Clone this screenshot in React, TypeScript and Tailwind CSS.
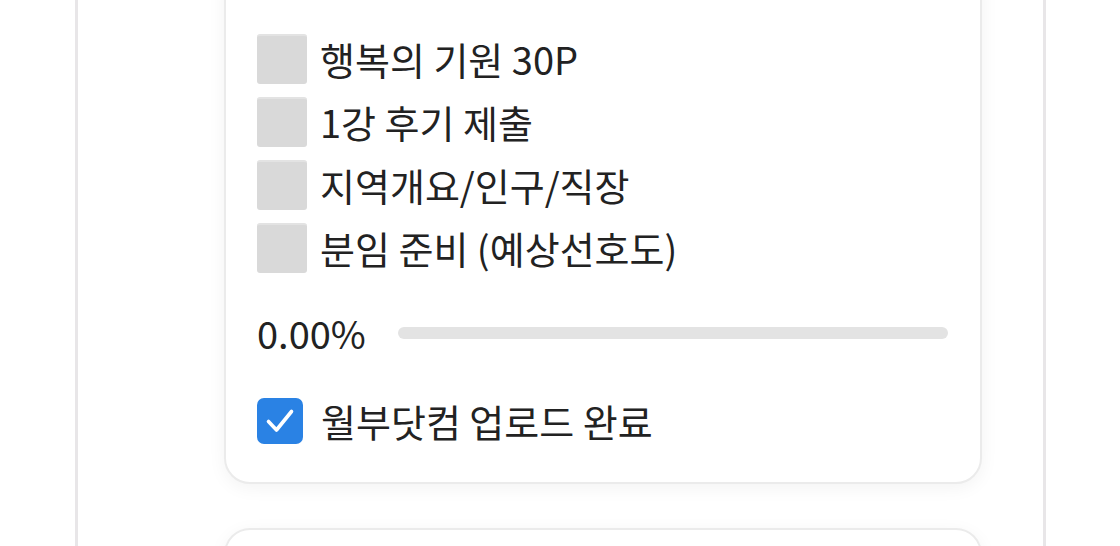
const tasks = ["행복의 기원 30P", "1강 후기 제출", "지역개요/인구/직장", "분임 준비 (예상선호도)"];

function TaskRow({ label }: { label: string }) {
  return (
    <div className="flex items-center gap-[13px] h-[50px]">
      <div className="w-[50px] h-[50px] rounded-[3px] bg-[#d9d9d9] border-t-2 border-[#e3e3e3] shrink-0" />
      <span className="text-[38px] leading-none text-[#222]">{label}</span>
    </div>
  );
}

export default function App() {
  return (
    <div
      className="w-[1120px] h-[546px] overflow-hidden bg-white"
      style={{ fontFamily: '"Noto Sans CJK KR", "Noto Sans", sans-serif' }}
    >
      <div className="ml-[75px] w-[971px] h-full flex flex-col border-x-[3px] border-[#e8e6e8] pl-[146px] pr-[61px]">
        {/* Study card */}
        <div className="-mt-[40px] pt-[72px] pb-[38px] pl-[31px] pr-[32px] rounded-[26px] border-2 border-[#ebebeb] bg-white shadow-[0_4px_18px_rgba(0,0,0,0.05)]">
          <div className="flex flex-col gap-[13px]">
            {tasks.map((t) => (
              <TaskRow key={t} label={t} />
            ))}
          </div>

          <div className="flex items-center gap-[32px] mt-[41px]">
            <span className="text-[38px] leading-none text-[#222]">0.00%</span>
            <div className="flex-1 h-[12px] rounded-full bg-[#e3e3e3]" />
          </div>

          <div className="flex items-center gap-[18px] mt-[46px]">
            <div className="w-[46px] h-[46px] rounded-[7px] bg-[#2a82e4] flex items-center justify-center shrink-0">
              <svg width="46" height="46" viewBox="0 0 46 46" fill="none">
                <path d="M11.5 23.5 L19.5 32 L34.5 13.5" stroke="white" strokeWidth="3.6" strokeLinecap="round" strokeLinejoin="round" />
              </svg>
            </div>
            <span className="text-[38px] leading-none text-[#222]">월부닷컴 업로드 완료</span>
          </div>
        </div>

        {/* Next card */}
        <div className="mt-[44px] h-[80px] shrink-0 rounded-t-[26px] border-2 border-[#ebebeb] bg-white shadow-[0_4px_18px_rgba(0,0,0,0.05)]" />
      </div>
    </div>
  );
}
